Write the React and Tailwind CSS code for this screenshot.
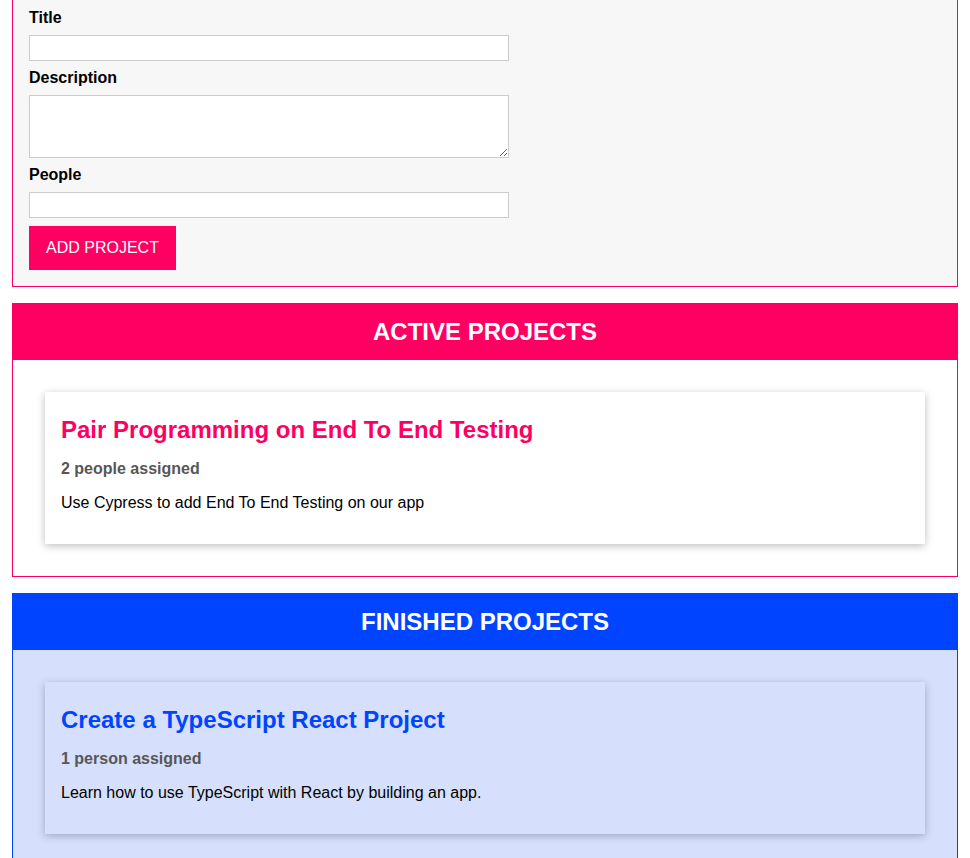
const font = { fontFamily: '"Liberation Sans", Arial, Helvetica, sans-serif' }

function ProjectItem({ title, people, description, color }) {
  return (
    <li className="m-4 p-4 shadow-[0_2px_8px_rgba(0,0,0,0.26)]">
      <h2 className={`my-2 text-[24px] leading-[28px] font-bold ${color}`}>{title}</h2>
      <h3 className="mt-4 text-[16px] leading-[18px] font-bold text-[#575757]">{people}</h3>
      <p className="my-4 text-[16px] leading-[18px] text-black">{description}</p>
    </li>
  )
}

function ProjectList({ heading, variant, children }) {
  const finished = variant === 'finished'
  return (
    <section
      className={`mx-3 mt-4 border ${finished ? 'border-[#0044ff] bg-[#d6e0fd]' : 'border-[#ff0062] bg-white'}`}
    >
      <header
        className={`flex h-14 items-center justify-center ${finished ? 'bg-[#0044ff]' : 'bg-[#ff0062]'}`}
      >
        <h2 className="text-[24px] font-bold text-white">{heading}</h2>
      </header>
      <ul className="p-4">{children}</ul>
    </section>
  )
}

export default function App() {
  return (
    <div className="flex min-h-[858px] flex-col bg-white pb-4" style={font}>
      <form className="mx-3 -mt-[16px] border border-[#ff0062] bg-[#f7f7f7] p-4">
        <label className="my-2 block text-[16px] leading-[18px] font-bold">Title</label>
        <input className="my-2 block h-[26px] w-[480px] border border-[#ccc] bg-white px-1" />
        <label className="my-2 block text-[16px] leading-[18px] font-bold">Description</label>
        <textarea className="my-2 block h-[63px] w-[480px] border border-[#ccc] bg-white px-1" />
        <label className="my-2 block text-[16px] leading-[18px] font-bold">People</label>
        <input className="my-2 block h-[26px] w-[480px] border border-[#ccc] bg-white px-1" />
        <button
          type="button"
          className="block h-[44px] border border-[#ff0062] bg-[#ff0062] px-4 text-[16px] text-white"
        >
          ADD PROJECT
        </button>
      </form>

      <ProjectList heading="ACTIVE PROJECTS" variant="active">
        <ProjectItem
          title="Pair Programming on End To End Testing"
          people="2 people assigned"
          description="Use Cypress to add End To End Testing on our app"
          color="text-[#ff0062]"
        />
      </ProjectList>

      <ProjectList heading="FINISHED PROJECTS" variant="finished">
        <ProjectItem
          title="Create a TypeScript React Project"
          people="1 person assigned"
          description="Learn how to use TypeScript with React by building an app."
          color="text-[#0044ff]"
        />
      </ProjectList>
    </div>
  )
}
